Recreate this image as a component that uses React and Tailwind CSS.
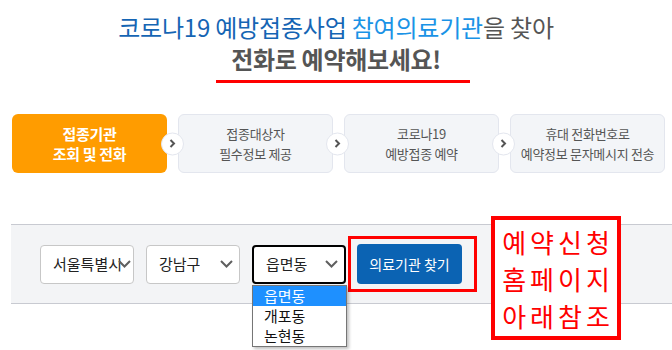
import React from 'react';

const steps = [
  { lines: ['접종기관', '조회 및 전화'], active: true },
  { lines: ['접종대상자', '필수정보 제공'] },
  { lines: ['코로나19', '예방접종 예약'] },
  { lines: ['휴대 전화번호로', '예약정보 문자메시지 전송'] },
];

const Chevron = ({ className = '' }) => (
  <svg className={className} width="13" height="8" viewBox="0 0 13 8" fill="none">
    <path d="M1 1l5.5 5.5L12 1" stroke="#5f5f5f" strokeWidth="2" />
  </svg>
);

const SelectBox = ({ label, focused, chevronClass = 'right-[6px]' }) => (
  <div
    className={`relative h-[39px] w-[94px] rounded-[4px] bg-white flex items-center pl-[12px] text-[15px] text-[#222] ${
      focused ? 'border-2 border-black pl-[11px]' : 'border border-[#c7c7c7]'
    }`}
  >
    <span className="whitespace-nowrap overflow-hidden">{label}</span>
    <Chevron className={`absolute top-1/2 -translate-y-1/2 ${chevronClass}`} />
  </div>
);

export default function App() {
  return (
    <div className="relative w-[672px] h-[350px] overflow-hidden bg-white font-['Noto_Sans_CJK_KR','Noto_Sans',sans-serif]">
      {/* heading */}
      <div className="pt-[11px] text-center">
        <p className="text-[24px] leading-[32px] tracking-[-0.2px] text-[#555]">
          <span className="text-[#1565b4]">코로나19 예방접종사업 </span>
          <span className="text-[#1a93e6]">참여의료기관</span>을 찾아
        </p>
        <p className="text-[24px] leading-[32px] font-bold tracking-[-0.3px] text-[#555]">전화로 예약해보세요!</p>
      </div>
      <div className="ml-[216px] mt-[5px] h-[3px] w-[254px] bg-[#ff0000]" />

      {/* steps */}
      <div className="mt-[31px] flex gap-[11px] pl-[12px]">
        {steps.map((step, i) => (
          <div
            key={i}
            className={`relative flex h-[59px] w-[155px] flex-col items-center justify-center rounded-[6px] ${
              step.active
                ? 'bg-[#ff9c00] text-white font-bold text-[15px] leading-[20px]'
                : 'border border-[#e3e6ee] bg-[#f3f5f8] text-[#555] text-[13px] leading-[20px]'
            }`}
          >
            {step.lines.map((l) => (
              <span key={l} className="whitespace-nowrap tracking-[-0.3px]">{l}</span>
            ))}
            {i < 3 && (
              <div className="absolute right-[-17px] top-1/2 z-10 flex h-[23px] w-[23px] -translate-y-1/2 items-center justify-center rounded-full border border-[#e3e6ee] bg-white">
                <svg width="7" height="10" viewBox="0 0 7 10" fill="none">
                  <path d="M1.5 1.5L5 5l-3.5 3.5" stroke="#555" strokeWidth="2" />
                </svg>
              </div>
            )}
          </div>
        ))}
      </div>

      {/* search panel */}
      <div className="mt-[51px] ml-[11px] flex h-[80px] items-center border-y border-[#c8cad1] bg-[#f3f4f6] pl-[29px]">
        <SelectBox label="서울특별시" chevronClass="right-[2px]" />
        <div className="ml-[12px]">
          <SelectBox label="강남구" />
        </div>
        <div className="relative ml-[12px]">
          <SelectBox label="읍면동" focused />
          <ul className="absolute left-0 top-[40px] w-[95px] border border-[#767676] bg-white text-[15px] leading-[20px] text-[#111] shadow-[2px_2px_3px_rgba(0,0,0,0.25)]">
            <li className="bg-[#1e90ff] pl-[11px] text-white">읍면동</li>
            <li className="pl-[11px]">개포동</li>
            <li className="pl-[11px]">논현동</li>
          </ul>
        </div>
        <div className="ml-[2px] border-[3px] border-[#ff0000] py-[5px] pl-[6px] pr-[12px]">
          <button className="h-[40px] w-[105px] rounded-[4px] bg-[#0b63b3] text-[14px] text-white">
            의료기관 찾기
          </button>
        </div>
      </div>

      {/* annotation */}
      <div className="absolute left-[491px] top-[216px] flex h-[124px] w-[130px] flex-col items-center justify-center border-[4px] border-[#ff0000] bg-white text-[26px] leading-[37px] tracking-[4px] text-[#ff0000]">
        <span className="block pl-[4px]">예약신청</span>
        <span className="block pl-[4px]">홈페이지</span>
        <span className="block pl-[4px]">아래참조</span>
      </div>
    </div>
  );
}
